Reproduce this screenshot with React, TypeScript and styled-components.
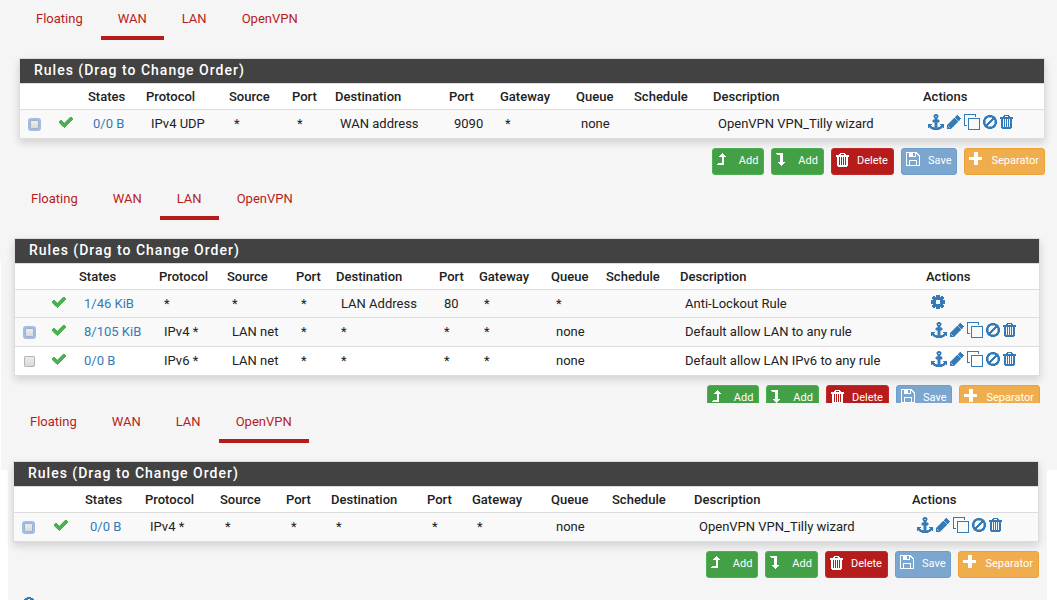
import React from "react";
import styled, { createGlobalStyle } from "styled-components";

const GlobalStyle = createGlobalStyle`
  * { box-sizing: border-box; }
  body {
    margin: 0;
    background: #fff;
    color: #212121;
    font: 13px/18px Roboto, "Liberation Sans", sans-serif;
  }
`;

const Page = styled.main`
  height: 100vh;
  overflow: hidden;
  background:
    linear-gradient(#f5f5f5, #f5f5f5) 0 0 / 100% 262px no-repeat,
    linear-gradient(#f5f5f5, #f5f5f5) 1px 262px / 100% 208px no-repeat,
    linear-gradient(#f5f5f5, #f5f5f5) 8px 470px / calc(100% - 18px) 100% no-repeat;
`;

const Section = styled.section<{ $left: number; $right: number }>`
  padding: 0 ${(p) => p.$right}px 0 ${(p) => p.$left}px;
`;

const Tabs = styled.nav`
  display: flex;
  gap: 1px;
  height: 40px;
  margin-bottom: 18px;
`;

const Tab = styled.a<{ $active: boolean }>`
  padding: 10px 17px 0;
  border-bottom: 4px solid ${(p) => (p.$active ? "#b71c1c" : "transparent")};
  color: #b71c1c;
  text-decoration: none;
`;

const Panel = styled.div`
  border: 1px solid #ddd;
  background: #fff;
  box-shadow: 0 4px 8px rgba(0, 0, 0, 0.14);
`;

const PanelTitle = styled.h2`
  margin: 0;
  padding: 2px 14px;
  height: 24px;
  background: #424242;
  color: #fff;
  font-size: 14px;
  font-weight: 500;
  line-height: 18px;
  letter-spacing: 1px;
`;

const Table = styled.table`
  width: 100%;
  table-layout: fixed;
  border-collapse: separate;
  border-spacing: 0;
  white-space: nowrap;
`;

const Row = styled.tr<{ $shaded: boolean }>`
  background: ${(p) => (p.$shaded ? "#f9f9f9" : "#fff")};
`;

const Th = styled.th`
  height: 26px;
  padding: 0 4px;
  border-top: 1px solid #ddd;
  font-weight: 500;
  text-align: left;
`;

const Td = styled.td`
  height: 28px;
  padding: 0 0 0 9px;
  border-top: 1px solid #ddd;
`;

const CheckTd = styled(Td)<{ $filled: boolean }>`
  height: ${(p) => (p.$filled ? 29 : 28)}px;
  padding-left: 8px;
`;

const StateTd = styled(Td)`
  padding-left: 4px;
`;

const Check = styled.input<{ $ring: boolean }>`
  appearance: none;
  display: block;
  width: 13px;
  height: 13px;
  margin: 0;
  border: ${(p) => (p.$ring ? "2px solid #9dbdf2" : "1px solid transparent")};
  border-radius: 3px;
  background: linear-gradient(#eee, #d8d8d8) padding-box;
  box-shadow: inset 0 0 0 1px ${(p) => (p.$ring ? "#a9aeb8" : "#b4b4b4")};
`;

const Link = styled.a`
  color: #337ab7;
  text-decoration: none;
`;

const Actions = styled.div`
  display: flex;
  align-items: center;
  gap: 3px;
  padding-bottom: 4px;
`;

const IconLink = styled(Link)`
  display: flex;
`;

const Glyph = styled.svg`
  display: block;
  flex: none;
  fill: currentColor;
  shape-rendering: crispEdges;
`;

const Mark = styled.span`
  display: block;
  color: #4caf50;
  padding-bottom: 4px;
`;

const Buttons = styled.div<{ $clipped?: boolean }>`
  display: flex;
  justify-content: flex-end;
  gap: 7px;
  margin-top: 9px;
  height: ${(p) => (p.$clipped ? "18px" : "27px")};
  overflow: hidden;
`;

const tones = {
  green: ["#43a047", "#4caf50"],
  red: ["#b71c1c", "#c62828"],
  blue: ["#7aa6cf", "#6d9dca"],
  orange: ["#f0ad4e", "#eea236"],
};
type Tone = keyof typeof tones;

const Button = styled.button<{ $tone: Tone }>`
  display: flex;
  gap: 8px;
  height: 27px;
  padding: 3px 5px 3px 4px;
  border: 1px solid ${(p) => tones[p.$tone][1]};
  border-radius: 3px;
  background: ${(p) => tones[p.$tone][0]};
  color: #fff;
  font: 11px/18px Roboto, "Liberation Sans", sans-serif;
`;

const Info = styled.div`
  padding: 18px 0 0 9px;
  color: #337ab7;
`;

type GlyphShape = { box: string; w: number; d: string; stroke?: number; even?: boolean };

const glyphs = {
  anchor: {
    box: "0 0 1792 1792", w: 16, stroke: 50,
    d: "M960 256q0-26-19-45t-45-19-45 19-19 45 19 45 45 19 45-19 19-45zm832 928v352q0 22-20 30-8 2-12 2-12 0-23-9l-93-93q-119 143-318.5 226.5t-429.5 83.5-429.5-83.5-318.5-226.5l-93 93q-9 9-23 9-4 0-12-2-20-8-20-30v-352q0-14 9-23t23-9h352q22 0 30 20 8 19-7 35l-100 100q67 91 189.5 153.5t271.5 82.5v-647h-192q-26 0-45-19t-19-45v-128q0-26 19-45t45-19h192v-163q-58-34-93-92.5t-35-128.5q0-106 75-181t181-75 181 75 75 181q0 70-35 128.5t-93 92.5v163h192q26 0 45 19t19 45v128q0 26-19 45t-45 19h-192v647q149-20 271.5-82.5t189.5-153.5l-100-100q-15-16-7-35 8-20 30-20h352q14 0 23 9t9 23z",
  },
  pencil: {
    box: "128 0 1568 1792", w: 14, stroke: 50, even: true,
    d: "M400 1536l60-60-172-172-60 60v60h90v112h82zM960 416l416 416-832 832h-416v-416zm683 96q0 53-37 90l-166 166-416-416 166-165q36-38 90-38 53 0 91 38l235 234q37 39 37 91z",
  },
  clone: { box: "0 0 16 16", w: 16, even: true, d: "M4 4h12v12H4zM5 5v10h10V5zM0 0h12v3h-1V1H1v10h2v1H0z" },
  ban: {
    box: "112 0 1568 1792", w: 14, stroke: 60,
    d: "M1440 893q0-161-87-295l-754 753q137 89 297 89 111 0 211.5-43.5t173.5-116.5 116-174.5 43-212.5zm-999 299l755-754q-135-91-300-91-148 0-273 73t-198 199-73 274q0 162 89 299zm1223-299q0 157-61 300t-163.5 246-245 164-298.5 61-298.5-61-245-164-163.5-246-61-300 61-299.5 163.5-245.5 245-164 298.5-61 298.5 61 245 164 163.5 245.5 61 299.5z",
  },
  trash: {
    box: "0 0 13 16", w: 13, even: true,
    d: "M4 1h5v1h1v1h3v2h-1v9h-1v1H2v-1H1V5H0V3h3V2h1zM5 2v1h3V2zM3 5v8h1V5zM5 5v8h1V5zM7 5v8h1V5zM9 5v8h1V5z",
  },
  cog: {
    box: "0 0 14 16", w: 14, even: true,
    d: "M5 1h4v2h1V2h2v1h1v2h-1v1h2v4h-2v1h1v2h-1v1h-2v-1H9v2H5v-2H4v1H2v-1H1v-2h1v-1H0V6h2V5H1V3h1V2h2v1h1zM5 6v4h4V6z",
  },
  check: {
    box: "112 0 1568 1792", w: 14, stroke: 40,
    d: "M1671 566q0 40-28 68l-724 724-136 136q-28 28-68 28t-68-28l-136-136-362-362q-28-28-28-68t28-68l136-136q28-28 68-28t68 28l294 295 656-657q28-28 68-28t68 28l136 136q28 28 28 68z",
  },
  up: { box: "1 0 14 16", w: 14, d: "M6 1h1v1h1v1h1v1h1v1H8v8H1v-1h1v-1h4V5H3V4h1V3h1V2h1z" },
  down: { box: "0 0 14 16", w: 14, d: "M0 1h7v9h2v1H8v1H7v1H6v1H5v-1H4v-1H3v-1H2v-1h2V3H1V2H0z" },
  plus: { box: "0 0 14 16", w: 14, d: "M5 0h4v5h4v3H9v5H5V8H0V5h5z" },
  save: {
    box: "0 0 14 16", w: 14, even: true,
    d: "M0 0h11v1h1v1h1v1h1v11H0zM1 1v12h2V8h8v5h2V4h-1V3h-1V2h-1v3H3V1zM7 1v3h2V1zM4 9v4h6V9z",
  },
  info: {
    box: "0 0 14 16", w: 14, even: true,
    d: "M5 1h4v1h2v1h1v1h1v2h1v4h-1v2h-1v1h-1v1H9v1H5v-1H3v-1H2v-1H1v-2H0V6h1V4h1V3h1V2h2zM6 3v2h2V3zM5 7v1h1v3H5v1h4v-1H8V7z",
  },
} satisfies Record<string, GlyphShape>;
type GlyphName = keyof typeof glyphs;

const Icon = ({ name }: { name: GlyphName }) => {
  const shape: GlyphShape = glyphs[name];
  return (
    <Glyph width={shape.w} height={16} viewBox={shape.box} aria-hidden="true">
      <path
        d={shape.d}
        fillRule={shape.even ? "evenodd" : "nonzero"}
        stroke={shape.stroke ? "currentColor" : "none"}
        strokeWidth={shape.stroke}
      />
    </Glyph>
  );
};

const headings = ["States", "Protocol", "Source", "Port", "Destination", "Port", "Gateway", "Queue", "Schedule", "Description", "Actions"];
const tabNames = ["Floating", "WAN", "LAN", "OpenVPN"];
const ruleActions: [GlyphName, string][] = [
  ["anchor", "Move rule"], ["pencil", "Edit"], ["clone", "Copy"], ["ban", "Disable"], ["trash", "Delete rule"],
];
const lockedActions: [GlyphName, string][] = [["cog", "Settings"]];

type Rule = { box?: "plain" | "ring"; cells: string[] };
type Group = { tab: string; left: number; right: number; cols: (number | "auto")[]; rules: Rule[]; clipped?: boolean };

const groups: Group[] = [
  {
    tab: "WAN", left: 19, right: 12,
    cols: [35, 29, 58, 83, 63, 43, 114, 51, 76, 58, 79, "auto", 125],
    rules: [{ box: "ring", cells: ["0/0 B", "IPv4 UDP", "*", "*", "WAN address", "9090", "*", "none", "", "OpenVPN VPN_Tilly wizard"] }],
  },
  {
    tab: "LAN", left: 14, right: 17, clipped: true,
    cols: [33, 27, 80, 68, 69, 40, 103, 40, 72, 55, 74, "auto", 117],
    rules: [
      { cells: ["1/46 KiB", "*", "*", "*", "LAN Address", "80", "*", "*", "", "Anti-Lockout Rule"] },
      { box: "ring", cells: ["8/105 KiB", "IPv4 *", "LAN net", "*", "*", "*", "*", "none", "", "Default allow LAN to any rule"] },
      { box: "plain", cells: ["0/0 B", "IPv6 *", "LAN net", "*", "*", "*", "*", "none", "", "Default allow LAN IPv6 to any rule"] },
    ],
  },
  {
    tab: "OpenVPN", left: 13, right: 18,
    cols: [36, 31, 60, 75, 66, 45, 96, 45, 79, 61, 82, "auto", 130],
    rules: [{ box: "ring", cells: ["0/0 B", "IPv4 *", "*", "*", "*", "*", "*", "none", "", "OpenVPN VPN_Tilly wizard"] }],
  },
];

const RuleRow = ({ rule, shaded }: { rule: Rule; shaded: boolean }) => (
  <Row $shaded={shaded}>
    <CheckTd $filled={!!rule.box}>
      {rule.box && <Check type="checkbox" aria-label={`Select rule ${rule.cells[1]}`} $ring={rule.box === "ring"} />}
    </CheckTd>
    <StateTd><Mark><Icon name="check" /></Mark></StateTd>
    {rule.cells.map((text, i) => (
      <Td key={i}>{i === 0 ? <Link href="#states">{text}</Link> : text}</Td>
    ))}
    <Td>
      <Actions>
        {(rule.box ? ruleActions : lockedActions).map(([name, label]) => (
          <IconLink key={name} href={`#${name}`} aria-label={label}><Icon name={name} /></IconLink>
        ))}
      </Actions>
    </Td>
  </Row>
);

const RuleGroup = ({ group }: { group: Group }) => (
  <Section $left={group.left} $right={group.right}>
    <Tabs>
      {tabNames.map((name) => (
        <Tab key={name} href={`#${name}`} $active={name === group.tab}>{name}</Tab>
      ))}
    </Tabs>
    <Panel>
      <PanelTitle>Rules (Drag to Change Order)</PanelTitle>
      <Table>
        <colgroup>{group.cols.map((w, i) => <col key={i} width={w === "auto" ? undefined : w} />)}</colgroup>
        <thead>
          <tr>
            <Th /><Th />
            {headings.map((h, i) => <Th key={i} scope="col">{h}</Th>)}
          </tr>
        </thead>
        <tbody>
          {group.rules.map((rule, i) => <RuleRow key={i} rule={rule} shaded={i < 2} />)}
        </tbody>
      </Table>
    </Panel>
    <Buttons $clipped={group.clipped}>
      <Button type="button" $tone="green"><Icon name="up" />Add</Button>
      <Button type="button" $tone="green"><Icon name="down" />Add</Button>
      <Button type="button" $tone="red"><Icon name="trash" />Delete</Button>
      <Button type="button" $tone="blue"><Icon name="save" />Save</Button>
      <Button type="button" $tone="orange"><Icon name="plus" />Separator</Button>
    </Buttons>
  </Section>
);

const Stack = styled.div`
  display: flex;
  flex-direction: column;
`;

const Spacer = styled.div`
  padding-bottom: 5px;
`;

export default function App() {
  return (
    <Page>
      <GlobalStyle />
      <Stack>
        <Spacer><RuleGroup group={groups[0]} /></Spacer>
        <RuleGroup group={groups[1]} />
        <RuleGroup group={groups[2]} />
        <Section $left={13} $right={18}><Info><Icon name="info" /></Info></Section>
      </Stack>
    </Page>
  );
}
